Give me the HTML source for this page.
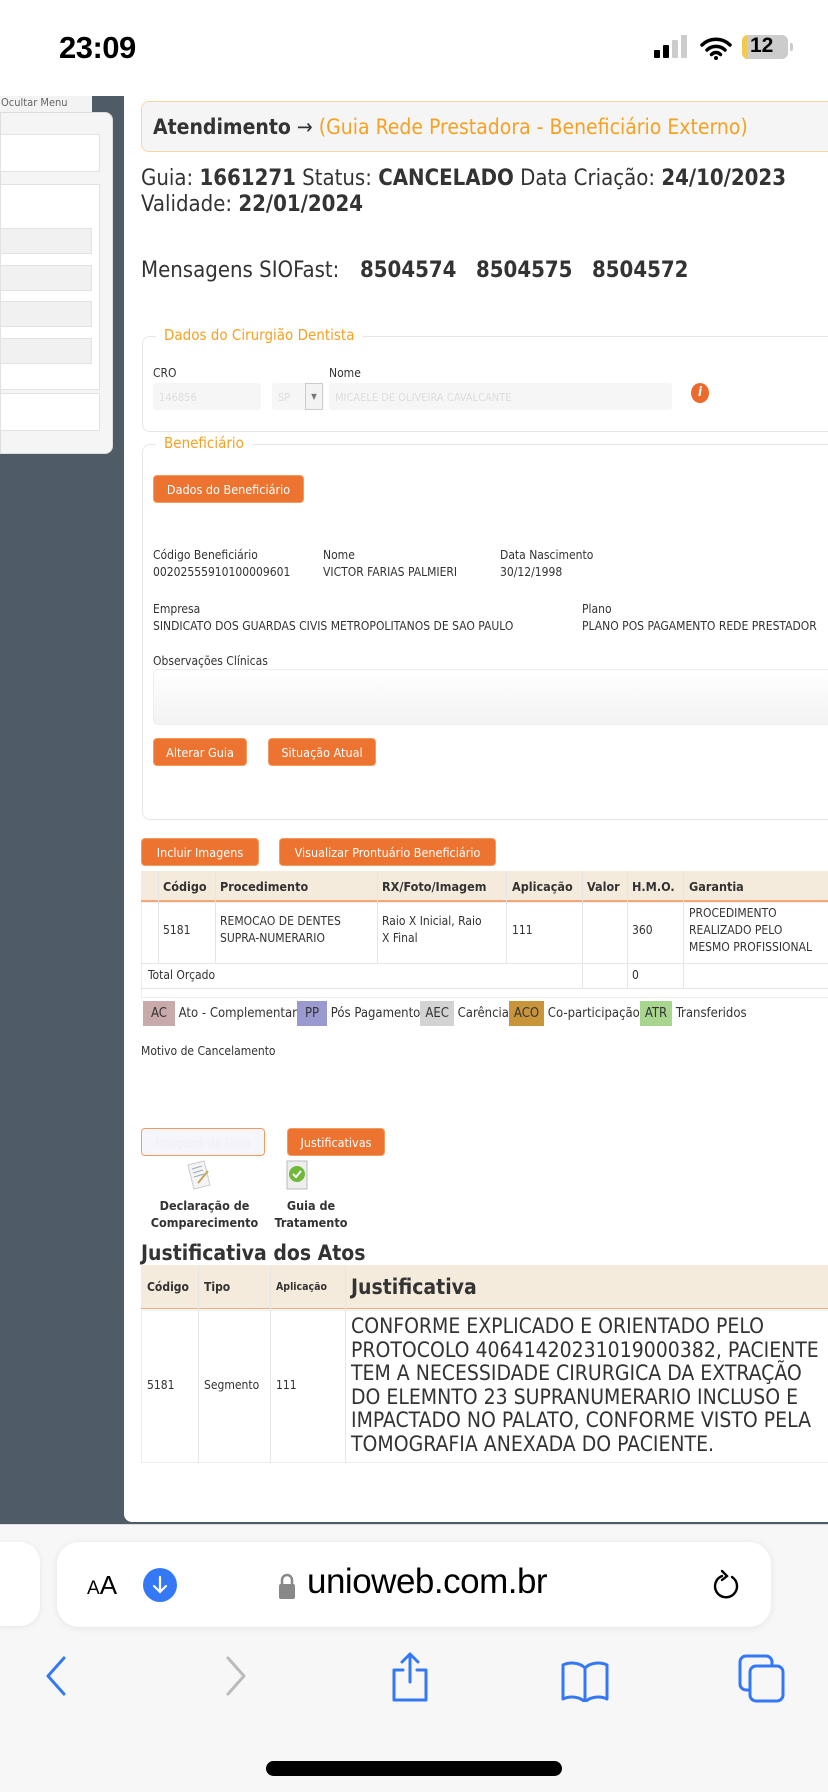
<!DOCTYPE html>
<html><head><meta charset="utf-8"><style>
*{box-sizing:border-box;margin:0;padding:0}
body{width:828px;height:1792px;position:relative;overflow:hidden;background:#fff;font-family:"DejaVu Sans Condensed","DejaVu Sans",sans-serif;color:#333}
.a{position:absolute}
.btn{position:absolute;background:#ec7330;color:#fff;border:1px solid #f39a5e;border-radius:4px;font-size:12.5px;display:flex;align-items:center;justify-content:center;white-space:nowrap}
.sm{font-size:12px;color:#333}
.fs{position:absolute;border:1px solid #e6e6e6;border-radius:8px}
.lg{position:absolute;background:#fff;color:#f5a123;font-size:15px;padding:0 8px}
.sf{font-family:"Liberation Sans",sans-serif}
</style></head><body>
<div class="a sf" style="left:59px;top:30px;font-size:31px;font-weight:bold;color:#000;letter-spacing:-0.5px">23:09</div>
<div class="a" style="left:654px;top:50px;width:6px;height:8px;background:#000;border-radius:1px"></div>
<div class="a" style="left:663px;top:45px;width:6px;height:13px;background:#000;border-radius:1px"></div>
<div class="a" style="left:672px;top:40px;width:6px;height:18px;background:#ccc;border-radius:1px"></div>
<div class="a" style="left:681px;top:35px;width:6px;height:23px;background:#ccc;border-radius:1px"></div>
<svg class="a" style="left:700px;top:36px" width="32" height="24" viewBox="0 0 32 24"><path d="M2 9a20 20 0 0 1 28 0M7 14a13 13 0 0 1 18 0M11.5 18.5a6 6 0 0 1 9 0" stroke="#000" stroke-width="3.5" fill="none" stroke-linecap="round"/><circle cx="16" cy="22" r="2" fill="#000"/></svg>
<div class="a" style="left:742px;top:35px;width:46px;height:24px;background:#ccc;border-radius:6px;overflow:hidden"><div style="width:5px;height:24px;background:#f2c94c"></div></div>
<div class="a sf" style="left:750px;top:34px;font-size:21px;font-weight:bold;color:#000">12</div>
<div class="a" style="left:790px;top:43px;width:3px;height:8px;background:#ccc;border-radius:0 2px 2px 0"></div>
<div class="a" style="left:0;top:96px;width:828px;height:1428px;background:#4f5b66"></div>
<div class="a" style="left:0;top:96px;width:92px;height:16px;background:#f3f3f3;font-size:11px;color:#666;padding-left:1px">Ocultar Menu</div>
<div class="a" style="left:0;top:112px;width:113px;height:342px;background:#f5f5f5;border-radius:0 8px 8px 0;border:1px solid #ddd"></div>
<div class="a" style="left:0;top:134px;width:100px;height:38px;background:#fff;border:1px solid #e2e2e2"></div>
<div class="a" style="left:0;top:184px;width:100px;height:206px;background:#fff;border:1px solid #e2e2e2"></div>
<div class="a" style="left:0;top:228px;width:92px;height:26px;background:#f1f1f1;border:1px solid #e2e2e2"></div>
<div class="a" style="left:0;top:265px;width:92px;height:26px;background:#f1f1f1;border:1px solid #e2e2e2"></div>
<div class="a" style="left:0;top:301px;width:92px;height:26px;background:#f1f1f1;border:1px solid #e2e2e2"></div>
<div class="a" style="left:0;top:338px;width:92px;height:26px;background:#f1f1f1;border:1px solid #e2e2e2"></div>
<div class="a" style="left:0;top:393px;width:100px;height:38px;background:#fff;border:1px solid #e2e2e2"></div>
<div class="a" style="left:124px;top:96px;width:710px;height:1426px;background:#fff;border-radius:0 0 0 8px"></div>
<div class="a" style="left:141px;top:101px;width:700px;height:51px;background:#f5f5f5;border:1px solid #f5d7a5;border-radius:8px"></div>
<div class="a" style="left:153px;top:115px;font-size:21px;white-space:nowrap"><b style="color:#333">Atendimento</b> → <span style="color:#f5a123">(Guia Rede Prestadora - Beneficiário Externo)</span></div>
<div class="a" style="left:141px;top:166px;font-size:22px;line-height:26px;color:#333;white-space:nowrap">Guia: <b>1661271</b> Status: <b>CANCELADO</b> Data Criação: <b>24/10/2023</b><br>Validade: <b>22/01/2024</b></div>
<div class="a" style="left:141px;top:258px;font-size:22px;white-space:nowrap">Mensagens SIOFast:</div>
<div class="a" style="left:360px;top:258px;font-size:22px;font-weight:bold">8504574</div>
<div class="a" style="left:476px;top:258px;font-size:22px;font-weight:bold">8504575</div>
<div class="a" style="left:592px;top:258px;font-size:22px;font-weight:bold">8504572</div>
<div class="fs" style="left:142px;top:336px;width:700px;height:96px"></div>
<div class="lg" style="left:156px;top:326px">Dados do Cirurgião Dentista</div>
<div class="a sm" style="left:153px;top:366px">CRO</div>
<div class="a sm" style="left:329px;top:366px">Nome</div>
<div class="a" style="left:153px;top:383px;width:108px;height:27px;background:#f6f6f6;border-radius:3px;font-size:11px;color:#ddd;padding:8px 6px">146856</div>
<div class="a" style="left:272px;top:383px;width:52px;height:27px;background:#f6f6f6;border-radius:3px;font-size:11px;color:#ddd;padding:8px 6px">SP</div>
<div class="a" style="left:305px;top:383px;width:18px;height:27px;border:1px solid #ccc;background:#f3f3f3;font-size:8px;color:#777;text-align:center;line-height:25px">▼</div>
<div class="a" style="left:329px;top:383px;width:343px;height:27px;background:#f6f6f6;border-radius:3px;font-size:11px;color:#ddd;padding:8px 6px;white-space:nowrap">MICAELE DE OLIVEIRA CAVALCANTE</div>
<div class="a" style="left:691px;top:383px;width:18px;height:20px;border-radius:50%;background:#ec6a2c;color:#fff;font-size:13px;font-style:italic;font-weight:bold;text-align:center;line-height:20px">i</div>
<div class="fs" style="left:142px;top:444px;width:700px;height:376px"></div>
<div class="lg" style="left:156px;top:434px">Beneficiário</div>
<div class="btn" style="left:153px;top:475px;width:151px;height:28px">Dados do Beneficiário</div>
<div class="a sm" style="left:153px;top:547px;line-height:17px">Código Beneficiário<br>00202555910100009601</div>
<div class="a sm" style="left:323px;top:547px;line-height:17px;white-space:nowrap">Nome<br>VICTOR FARIAS PALMIERI</div>
<div class="a sm" style="left:500px;top:547px;line-height:17px">Data Nascimento<br>30/12/1998</div>
<div class="a sm" style="left:153px;top:601px;line-height:17px;white-space:nowrap">Empresa<br>SINDICATO DOS GUARDAS CIVIS METROPOLITANOS DE SAO PAULO</div>
<div class="a sm" style="left:582px;top:601px;line-height:17px;white-space:nowrap">Plano<br>PLANO POS PAGAMENTO REDE PRESTADOR</div>
<div class="a sm" style="left:153px;top:654px">Observações Clínicas</div>
<div class="a" style="left:153px;top:669px;width:690px;height:56px;border:1px solid #eee;border-radius:5px;background:linear-gradient(#fff,#f3f3f3)"></div>
<div class="btn" style="left:153px;top:738px;width:94px;height:28px">Alterar Guia</div>
<div class="btn" style="left:268px;top:738px;width:108px;height:28px">Situação Atual</div>
<div class="btn" style="left:141px;top:838px;width:118px;height:28px">Incluir Imagens</div>
<div class="btn" style="left:279px;top:838px;width:217px;height:28px">Visualizar Prontuário Beneficiário</div>
<div class="a" style="left:141px;top:871px;width:700px;height:31px;background:#f5ebdd;border-bottom:2px solid #f3a779"></div>
<div class="a" style="left:141px;top:902px;width:700px;height:96px;border:1px solid #eee"></div>
<div class="a" style="left:141px;top:963px;width:700px;height:1px;background:#e6e6e6"></div>
<div class="a" style="left:141px;top:988px;width:700px;height:1px;background:#e6e6e6"></div>
<div class="a" style="left:158px;top:871px;width:1px;height:92px;background:#e6e6e6"></div>
<div class="a" style="left:215px;top:871px;width:1px;height:92px;background:#e6e6e6"></div>
<div class="a" style="left:377px;top:871px;width:1px;height:92px;background:#e6e6e6"></div>
<div class="a" style="left:506px;top:871px;width:1px;height:92px;background:#e6e6e6"></div>
<div class="a" style="left:582px;top:871px;width:1px;height:118px;background:#e6e6e6"></div>
<div class="a" style="left:627px;top:871px;width:1px;height:118px;background:#e6e6e6"></div>
<div class="a" style="left:683px;top:871px;width:1px;height:118px;background:#e6e6e6"></div>
<div class="a" style="top:879px;left:0;font-size:12.5px;font-weight:bold;color:#333;white-space:nowrap">
<span class="a" style="left:163px">Código</span><span class="a" style="left:220px">Procedimento</span><span class="a" style="left:382px">RX/Foto/Imagem</span><span class="a" style="left:512px">Aplicação</span><span class="a" style="left:587px">Valor</span><span class="a" style="left:632px">H.M.O.</span><span class="a" style="left:689px">Garantia</span></div>
<div class="a sm" style="left:163px;top:923px">5181</div>
<div class="a sm" style="left:220px;top:913px;line-height:17px;white-space:nowrap">REMOCAO DE DENTES<br>SUPRA-NUMERARIO</div>
<div class="a sm" style="left:382px;top:913px;line-height:17px;white-space:nowrap">Raio X Inicial, Raio<br>X Final</div>
<div class="a sm" style="left:512px;top:923px">111</div>
<div class="a sm" style="left:632px;top:923px">360</div>
<div class="a sm" style="left:689px;top:905px;line-height:17px;white-space:nowrap">PROCEDIMENTO<br>REALIZADO PELO<br>MESMO PROFISSIONAL</div>
<div class="a sm" style="left:148px;top:968px">Total Orçado</div>
<div class="a sm" style="left:632px;top:968px">0</div>
<div class="a" style="left:143px;top:1001px;font-size:13px;white-space:nowrap;display:flex;align-items:center;height:25px;color:#333">
<span style="background:#c9aaaa;padding:5px 8px">AC</span>&nbsp;Ato - Complementar<span style="background:#9a9ad0;padding:5px 8px">PP</span>&nbsp;Pós Pagamento<span style="background:#d3d3d3;padding:5px 5px">AEC</span>&nbsp;Carência<span style="background:#c9953a;padding:5px 5px">ACO</span>&nbsp;Co-participação<span style="background:#a9d68e;padding:5px 5px">ATR</span>&nbsp;Transferidos</div>
<div class="a sm" style="left:141px;top:1044px">Motivo de Cancelamento</div>
<div class="btn" style="left:141px;top:1128px;width:124px;height:28px;background:#f6f5fc;color:#f0eef8;border:1px solid #f39a5e">Imagens da Guia</div>
<div class="btn" style="left:287px;top:1128px;width:98px;height:28px">Justificativas</div>
<svg class="a" style="left:184px;top:1159px" width="30" height="32"><path d="M4 6 L20 2 L26 26 L10 30 Z" fill="#f4f4f4" stroke="#ccc"/><path d="M8 10l10-3M9 14l10-3M10 18l10-3" stroke="#9ab" stroke-width="1"/><path d="M14 24l10-12" stroke="#c9a35a" stroke-width="2"/></svg>
<svg class="a" style="left:283px;top:1159px" width="30" height="32"><rect x="4" y="2" width="20" height="28" fill="#eee" stroke="#bbb"/><circle cx="14" cy="15" r="8" fill="#6fb83a"/><path d="M10 15l3 3 5-6" stroke="#fff" stroke-width="2" fill="none"/></svg>
<div class="a" style="left:141px;top:1197px;font-size:12.5px;font-weight:bold;line-height:17px;text-align:center;width:127px">Declaração de<br>Comparecimento</div>
<div class="a" style="left:266px;top:1197px;font-size:12.5px;font-weight:bold;line-height:17px;text-align:center;width:90px">Guia de<br>Tratamento</div>
<div class="a" style="left:141px;top:1241px;font-size:21px;font-weight:bold;color:#333">Justificativa dos Atos</div>
<div class="a" style="left:141px;top:1265px;width:700px;height:44px;background:#f5ebdd;border-bottom:1px solid #f3a779"></div>
<div class="a" style="left:141px;top:1310px;width:700px;height:153px;border:1px solid #eee"></div>
<div class="a" style="left:198px;top:1265px;width:1px;height:198px;background:#e6e6e6"></div>
<div class="a" style="left:270px;top:1265px;width:1px;height:198px;background:#e6e6e6"></div>
<div class="a" style="left:345px;top:1265px;width:1px;height:198px;background:#e6e6e6"></div>
<div class="a" style="left:147px;top:1280px;font-size:12px;font-weight:bold">Código</div>
<div class="a" style="left:204px;top:1280px;font-size:12px;font-weight:bold">Tipo</div>
<div class="a" style="left:276px;top:1281px;font-size:10.5px;font-weight:bold">Aplicação</div>
<div class="a" style="left:351px;top:1275px;font-size:21px;font-weight:bold">Justificativa</div>
<div class="a sm" style="left:147px;top:1378px">5181</div>
<div class="a sm" style="left:204px;top:1378px">Segmento</div>
<div class="a sm" style="left:276px;top:1378px">111</div>
<div class="a" style="left:351px;top:1315px;font-size:21px;line-height:23.5px;color:#333;white-space:nowrap">CONFORME EXPLICADO E ORIENTADO PELO<br>PROTOCOLO 40641420231019000382, PACIENTE<br>TEM A NECESSIDADE CIRURGICA DA EXTRAÇÃO<br>DO ELEMNTO 23 SUPRANUMERARIO INCLUSO E<br>IMPACTADO NO PALATO, CONFORME VISTO PELA<br>TOMOGRAFIA ANEXADA DO PACIENTE.</div>
<div class="a" style="left:0;top:1524px;width:828px;height:268px;background:#f7f7f7;border-top:1px solid #ddd"></div>
<div class="a" style="left:-20px;top:1542px;width:60px;height:84px;background:#fff;border-radius:20px;box-shadow:0 1px 6px rgba(0,0,0,.08)"></div>
<div class="a" style="left:57px;top:1542px;width:714px;height:85px;background:#fff;border-radius:22px;box-shadow:0 1px 8px rgba(0,0,0,.08)"></div>
<div class="a sf" style="left:87px;top:1570px;font-size:26px;color:#000"><span style="font-size:19px">A</span>A</div>
<div class="a" style="left:143px;top:1568px;width:34px;height:34px;border-radius:50%;background:#3478f6"></div>
<svg class="a" style="left:143px;top:1568px" width="34" height="34"><path d="M17 9v15M11 18l6 6 6-6" stroke="#fff" stroke-width="2.2" fill="none" stroke-linecap="round"/></svg>
<svg class="a" style="left:277px;top:1572px" width="20" height="28"><path d="M5 12V8a5 5 0 0 1 10 0v4" stroke="#888" stroke-width="2.5" fill="none"/><rect x="2" y="12" width="16" height="15" rx="2" fill="#888"/></svg>
<div class="a sf" style="left:307px;top:1562px;font-size:35px;color:#000;letter-spacing:-0.5px">unioweb.com.br</div>
<svg class="a" style="left:710px;top:1567px" width="32" height="36"><path d="M22 10a11 11 0 1 1-10-1" stroke="#000" stroke-width="2.4" fill="none" stroke-linecap="round"/><path d="M12 4l5 5-5 4" stroke="#000" stroke-width="2.4" fill="none" stroke-linecap="round"/></svg>
<svg class="a" style="left:44px;top:1656px" width="24" height="40"><path d="M20 2L4 20l16 18" stroke="#3478f6" stroke-width="3" fill="none" stroke-linecap="round" stroke-linejoin="round"/></svg>
<svg class="a" style="left:224px;top:1656px" width="24" height="40"><path d="M4 2l16 18L4 38" stroke="#bbb" stroke-width="3" fill="none" stroke-linecap="round" stroke-linejoin="round"/></svg>
<svg class="a" style="left:390px;top:1652px" width="40" height="50"><path d="M13 18H4v30h32V18h-9M20 2v28M12 10l8-8 8 8" stroke="#3478f6" stroke-width="3" fill="none" stroke-linecap="round" stroke-linejoin="round"/></svg>
<svg class="a" style="left:560px;top:1660px" width="50" height="42"><path d="M25 8c-6-6-16-6-22-3v34c6-3 16-3 22 3 6-6 16-6 22-3V5c-6-3-16-3-22 3zM25 8v34" stroke="#3478f6" stroke-width="3" fill="none" stroke-linejoin="round"/></svg>
<svg class="a" style="left:738px;top:1654px" width="48" height="50"><rect x="2" y="2" width="32" height="34" rx="6" stroke="#3478f6" stroke-width="3" fill="none"/><rect x="12" y="12" width="33" height="35" rx="6" stroke="#3478f6" stroke-width="3" fill="#f7f7f7"/></svg>
<div class="a" style="left:266px;top:1761px;width:296px;height:15px;background:#000;border-radius:8px"></div>
</body></html>
